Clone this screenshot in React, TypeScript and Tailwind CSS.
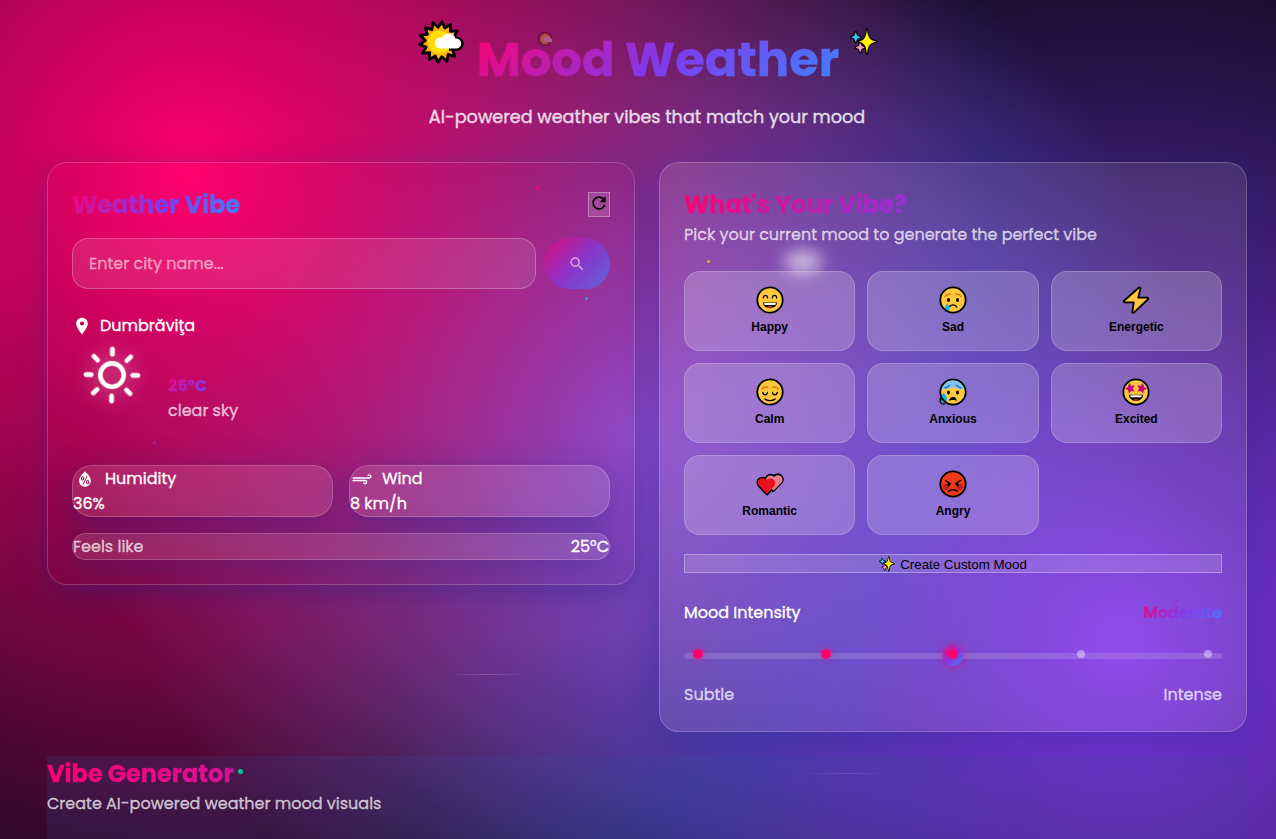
import React from "react";
import { MdLocationOn, MdRefresh, MdSearch } from "react-icons/md";
import { WiDaySunny, WiHumidity, WiStrongWind } from "react-icons/wi";

const spikes = Array.from({ length: 28 }, (_, i) => {
  const r = i % 2 ? 14.8 : 20.5;
  const a = (i * Math.PI) / 14 - Math.PI / 2 + 0.1;
  return `${22 + r * Math.cos(a)},${22 + r * Math.sin(a)}`;
}).join(" ");

function SunCloud({ className }: { className: string }) {
  return (
    <svg viewBox="0 0 46 44" className={className}>
      <polygon points={spikes} fill="#ffb00f" stroke="#000" strokeWidth="2.8" strokeLinejoin="round" />
      <circle cx="21.500" cy="22" r="11.5" fill="#ffdc05" />
      <path d="M31 29.300h7.500c8 0 7.400-10.600.2-11.500" fill="none" stroke="#000" strokeWidth="2.800" />
      <path d="M22.500 28.600a5.600 5.600 0 0 1 0-11.200 6 6 0 0 1 2-.1 7 7 0 0 1 13 1.200 5 5 0 1 1 1.200 10.100z" fill="#fff" />
    </svg>
  );
}

function Sparkles({ className }: { className: string }) {
  return (
    <svg viewBox="0 0 28 28" className={className} stroke="#000" strokeWidth="2.400" strokeLinejoin="round">
      <g>
        <path d="M5.800 4.200l1.300 3.700L10.800 9.200 7.100 10.500 5.800 14.200 4.500 10.500 1.300 9.200 4.500 7.900z" />
        <path d="M10.200 15l1.300 3.300L14.700 19.600 11.500 20.900 10.200 24.500 8.900 20.900 5.700 19.600 8.900 18.300z" />
        <path d="M17 1.500c.8 8 2.300 10.800 9.600 12-7.300 1.200-8.800 4-9.600 12.600-.8-8.600-2.300-11.400-8.300-12.600 6-1.200 7.500-4 8.300-12z" />
      </g>
      <g stroke="none">
        <path d="M5.800 4.200l1.500 3.500L10.800 9.200 7.300 10.700 5.800 14.200 4.300 10.700 1.300 9.200 4.300 7.700z" fill="#3bc5f0" />
        <path d="M10.200 15l1.500 3.100L14.700 19.600 11.700 21.100 10.200 24.500 8.700 21.100 5.700 19.600 8.700 18.100z" fill="#f29bb8" />
        <path d="M17 1.500c1 7.800 2.500 10.600 9.600 12-7.100 1.400-8.600 4.200-9.600 12.600-1-8.400-2.500-11.200-8.300-12.600 5.800-1.400 7.300-4.200 8.300-12z" fill="#fff000" />
      </g>
    </svg>
  );
}

function Face({ fill, children }: { fill: string; children: React.ReactNode }) {
  return (
    <svg viewBox="0 0 28 28" className="h-7 w-7" fill="none" strokeLinecap="round">
      <circle cx="14" cy="14" r="12.7" fill={fill} />
      {children}
      <circle cx="14" cy="14" r="12.700" stroke="#000" strokeWidth="1.800" />
    </svg>
  );
}

const yellow = "#ffc83d";

const moods: { name: string; icon: React.ReactNode }[] = [
  {
    name: "Happy",
    icon: (
      <Face fill={yellow}>
        <path d="M7.300 12c.4-3.400 4-3.400 4.400 0M16.300 12c.4-3.400 4-3.400 4.400 0" stroke="#000" strokeWidth="1.200" />
        <path d="M7 16.500h14c0 7.500-14 7.500-14 0z" fill="#000" />
        <path d="M8.200 17h11.600l-.4 1.900H8.600z" fill="#fff" />
        <path d="M11 21.200c1.500-1.600 4.500-1.600 6 0-1.600.8-4.400.8-6 0z" fill="#d6291c" />
      </Face>
    ),
  },
  {
    name: "Sad",
    icon: (
      <Face fill={yellow}>
        <path d="M6 10.500c1-1.800 3-2.600 5.200-2.200M22 10.500c-1-1.800-3-2.600-5.200-2.200" stroke="#d67d00" strokeWidth="1.400" />
        <ellipse cx="9.500" cy="14" rx="1.500" ry="2.100" fill="#000" />
        <ellipse cx="18.500" cy="14" rx="1.500" ry="2.100" fill="#000" />
        <path d="M10.200 21c1.300-2.800 6.300-2.800 7.600 0" stroke="#000" strokeWidth="1.400" />
        <path d="M8.300 17.500c2 3 2.800 4.200 2.300 5.700-.8 2-4 2-4.700 0-.5-1.500.4-2.700 2.400-5.700z" fill="#00b5f5" />
      </Face>
    ),
  },
  {
    name: "Energetic",
    icon: (
      <svg viewBox="0 0 28 28" className="h-7 w-7">
        <path d="M17 1.500L1.800 15l.6 1.400h9.400L10.300 26.500l1.300.4L26.200 13l-.5-1.400h-9.500L18.600 2z" fill={yellow} stroke="#000" strokeWidth="1.800" strokeLinejoin="round" />
      </svg>
    ),
  },
  {
    name: "Calm",
    icon: (
      <Face fill={yellow}>
        <path d="M5.800 11c.8-1.600 3-2.400 5.700-1.800M22.200 11c-.8-1.600-3-2.400-5.700-1.800" stroke="#d67d00" strokeWidth="1.400" />
        <path d="M6.800 14.500c.5 3 4.200 3 4.700 0M16.500 14.500c.5 3 4.200 3 4.700 0M9 21c2 2.200 8 2.200 10 0" stroke="#000" strokeWidth="1.400" />
      </Face>
    ),
  },
  {
    name: "Anxious",
    icon: (
      <Face fill={yellow}>
        <path d="M1.400 12.800a12.600 12.600 0 0 1 25.200 0c-4-3.600-21-3.600-25.200 0z" fill="#83c6f2" />
        <path d="M6 9.700c1.500.2 3-.8 4.500-2.400M22 9.700c-1.500.2-3-.8-4.500-2.400" stroke="#1376bd" strokeWidth="1.400" />
        <ellipse cx="9.500" cy="14.600" rx="1.500" ry="2.100" fill="#000" />
        <ellipse cx="18.500" cy="14.600" rx="1.500" ry="2.100" fill="#000" />
        <path d="M10 23c.6-5.400 7.400-5.400 8 0-1.500-1.200-6.500-1.200-8 0z" fill="#000" />
        <path d="M4.800 14.600c2.200 3.500 3.600 5.800 3 8-.9 2.900-5.400 2.900-6.200 0-.6-2.200 1-4.500 3.200-8z" fill="#00b5f5" />
        <path d="M1.300 20.500c-.8 4 1 6 4 5.500" stroke="#000" strokeWidth="1.400" />
      </Face>
    ),
  },
  {
    name: "Excited",
    icon: (
      <Face fill={yellow}>
        <path d="M7.200 4.800l1.900 2.900 3.500-.5-1.700 3.200 1.800 3-3.500-.4-2.300 2.500-.8-3.400-3.200-1.300 3-1.800z" fill="#c4007c" />
        <path d="M20.800 4.800l-1.900 2.900-3.500-.5 1.700 3.200-1.800 3 3.500-.4 2.300 2.500.8-3.400 3.200-1.300-3-1.800z" fill="#c4007c" />
        <path d="M7 16.700h14c0 8-14 8-14 0z" fill="#000" />
        <path d="M8.200 17.200h11.600l-.5 2H8.700z" fill="#fff" />
        <path d="M11.300 22c1.300-1.500 4-1.500 5.400 0-1.500.8-4 .8-5.400 0z" fill="#d6291c" />
      </Face>
    ),
  },
  {
    name: "Romantic",
    icon: (
      <svg viewBox="0 0 28 28" className="h-7 w-7">
        <g fill="#000" stroke="#000" strokeWidth="3.600" strokeLinejoin="round">
          <path d="M17 20.300l8-8.300c3.500-4.500-2.700-9.500-7-5-2.800-3-7.500-1-7.500 2.800z" />
          <path d="M11 23.500L3.200 15.300c-3.200-4.600 2.300-9.200 7.300-4.800 5-3.600 10 .8 7 5.500z" />
        </g>
        <path d="M17.500 20.800l8-8.300c3.500-5-2.700-10-7.500-5.500-2.800-3-8-1-8 2.800z" fill="#e87c8c" />
        <path d="M11 24L2.800 15.300c-3.200-5 2.300-9.700 7.500-5.300 5.400-3.800 11.200.8 8 6z" fill="#ea1020" />
      </svg>
    ),
  },
  {
    name: "Angry",
    icon: (
      <Face fill="#f03a17">
        <circle cx="7" cy="17" r="3" fill="#bb1d24" />
        <circle cx="21" cy="17" r="3" fill="#bb1d24" />
        <path d="M6.500 10.500l5 3.300M21.500 10.500l-5 3.300" stroke="#000" strokeWidth="1.300" />
        <ellipse cx="9.700" cy="14.600" rx="1.400" ry="2" fill="#000" />
        <ellipse cx="18.300" cy="14.600" rx="1.400" ry="2" fill="#000" />
        <path d="M9.500 21.300c2-2 7-2 9 0" stroke="#000" strokeWidth="1.400" />
      </Face>
    ),
  },
];

const steps = [true, true, true, false, false];

const gradientText = "bg-[linear-gradient(135deg,#ff006e_0%,#8338ec_50%,#3a86ff_100%)] bg-clip-text text-transparent";
const glassShadow = "shadow-[0_8px_32px_rgba(31,38,135,0.37)]";

export default function App() {
  return (
    <div className="relative h-[839px] w-full overflow-hidden bg-[#0f0a1e] bg-[radial-gradient(circle_800px_at_190px_175px,#ff006e_0%,transparent_100%),radial-gradient(circle_720px_at_1120px_640px,#8338ec_0%,transparent_100%),radial-gradient(circle_550px_at_640px_430px,#3a86ff_0%,transparent_100%)] font-['Poppins','Inter','Liberation_Sans',sans-serif] text-base leading-[25.6px] text-white [-webkit-text-stroke:0.3px]">
      <div className="flex h-full flex-col pl-[47px] pr-[29px]">
        <header className="flex h-[162px] shrink-0 flex-col items-center">
          <div className="relative ml-[22px] mt-[24px] flex h-[72px] items-center">
            <SunCloud className="absolute -left-[59px] -top-[4px] h-[44px] w-[46px]" />
            <h1 className={`text-[48px] font-bold leading-[72px] ${gradientText}`}>Mood Weather</h1>
            <Sparkles className="absolute -right-[39px] top-[4px] h-7 w-7" />
            <SunCloud className="absolute left-[60px] top-[7px] h-[16px] w-[17px] rotate-12 opacity-30" />
          </div>
          <p className="mt-[7px] text-[17.6px] leading-[28px] text-white/80">AI-powered weather vibes that match your mood</p>
        </header>

        <main className="grid grid-cols-2 items-start gap-6">
          <section className={`flex h-[423px] flex-col rounded-[20px] border border-white/20 p-6 ${glassShadow}`}>
            <div className="flex h-9 items-center justify-between">
              <h2 className={`text-2xl font-bold leading-9 ${gradientText}`}>Weather Vibe</h2>
              <button className="mb-[2px] flex h-[25px] w-[22px] justify-center border border-white/30 bg-white/15 text-black [-webkit-text-stroke:0]">
                <MdRefresh size={20} />
              </button>
            </div>
            <div className="mt-[15px] flex h-[51px] gap-2">
              <input placeholder="Enter city name..." className="min-w-0 flex-1 rounded-[16px] border border-white/25 bg-white/10 px-4 text-base text-white placeholder:text-white/50 focus:outline-none" />
              <button className="flex w-[66px] items-center justify-center rounded-[25px] bg-[linear-gradient(135deg,#ff006e_0%,#8338ec_50%,#3a86ff_100%)] opacity-60">
                <MdSearch size={18} />
              </button>
            </div>
            <div className="mt-6 flex h-[25px] items-center gap-2">
              <MdLocationOn size={20} />
              <span>Dumbrăviţa</span>
            </div>
            <div className="mt-[-3px] flex h-[90px] gap-4">
              <WiDaySunny size={80} stroke="currentColor" strokeWidth={0.1} className="mt-px shrink-0 rotate-1 drop-shadow-[0_0_8px_rgba(255,255,255,0.4)]" />
              <div className="pt-[38px] leading-[25px]">
                <div className={`w-[70px] font-bold ${gradientText}`}>25°C</div>
                <div className="text-white/70">clear sky</div>
              </div>
            </div>
            <div className="mt-10 grid grid-cols-2 gap-4">
              {[
                { label: "Humidity", value: "36%", Icon: WiHumidity },
                { label: "Wind", value: "8 km/h", Icon: WiStrongWind },
              ].map(({ label, value, Icon }) => (
                <div key={label} className={`h-[52px] rounded-[20px] border border-white/20 bg-white/[0.12] leading-[25px] ${glassShadow}`}>
                  <div className="flex items-center gap-2">
                    <Icon size={24} />
                    <span>{label}</span>
                  </div>
                  <div>{value}</div>
                </div>
              ))}
            </div>
            <div className={`mt-4 flex h-[27px] items-center justify-between rounded-[16px] border border-white/20 bg-white/[0.12] ${glassShadow}`}>
              <span className="text-white/70">Feels like</span>
              <span>25°C</span>
            </div>
          </section>

          <section className={`flex h-[570px] flex-col rounded-[20px] border border-white/20 bg-white/10 p-6 ${glassShadow}`}>
            <h2 className={`text-2xl font-bold leading-9 ${gradientText}`}>What's Your Vibe?</h2>
            <p className="h-[24px] leading-6 text-white/70">Pick your current mood to generate the perfect vibe</p>
            <div className="mt-6 grid grid-cols-3 gap-3">
              {moods.map((m) => (
                <button key={m.name} className="flex h-20 flex-col items-center rounded-[16px] border border-white/20 bg-white/20 pt-[14px] font-['Liberation_Sans',Arial,sans-serif] text-[12px] font-bold leading-[14px] text-black [-webkit-text-stroke:0]">
                  {m.icon}
                  <span className="mt-[6px]">{m.name}</span>
                </button>
              ))}
            </div>
            <button className="mt-[19px] flex h-[19px] shrink-0 items-center justify-center gap-[5px] border border-white/30 bg-white/15 font-['Liberation_Sans',Arial,sans-serif] text-[13.333px] leading-none text-black [-webkit-text-stroke:0]">
              <Sparkles className="mt-px h-4 w-4" />
              <span className="pt-[2px]">Create Custom Mood</span>
            </button>
            <div className="mt-[27px] flex h-[26px] shrink-0 items-center justify-between">
              <span>Mood Intensity</span>
              <span className={`font-semibold ${gradientText}`}>Moderate</span>
            </div>
            <div className="mt-[17px] flex h-[26px] items-center">
              <div className="relative h-1.5 w-full rounded-[3px] bg-white/15">
                <div className="absolute left-[259px] -top-[7px] h-5 w-5 rounded-full bg-[linear-gradient(135deg,#ff006e_0%,#8338ec_50%,#3a86ff_100%)] shadow-[0_0_10px_rgba(255,0,110,0.5)]" />
                <div className="absolute inset-x-[9px] -top-[4px] flex h-[10px] items-center justify-between">
                  {steps.map((on, i) =>
                    on ? (
                      <span key={i} className="h-[10px] w-[10px] rounded-full bg-[#ff006e] shadow-[0_0_8px_rgba(255,0,110,0.5)]" />
                    ) : (
                      <span key={i} className="m-px h-2 w-2 rounded-full bg-white/40" />
                    ),
                  )}
                </div>
              </div>
            </div>
            <div className="mt-[14px] flex h-6 items-center justify-between text-white/70">
              <span>Subtle</span>
              <span>Intense</span>
            </div>
          </section>
        </main>

        <section className="mt-6 flex-1 bg-[#3a4ca0]/20">
          <h2 className={`text-2xl font-bold leading-9 ${gradientText}`}>Vibe Generator</h2>
          <p className="leading-6 text-white/70">Create AI-powered weather mood visuals</p>
        </section>
      </div>

      <div className="pointer-events-none absolute inset-0">
        <span className="absolute left-[535px] top-[186px] h-1 w-1 rounded-full bg-[#ff006e]/70" />
        <span className="absolute left-[585px] top-[297px] h-[3px] w-[3px] rounded-full bg-[#06d6a0]/70" />
        <span className="absolute left-[153px] top-[441px] h-[3px] w-[3px] rounded-full bg-[#8338ec]/60" />
        <span className="absolute left-[707px] top-[260px] h-[3px] w-[3px] rounded-full bg-[#ffbe0b]/80" />
        <span className="absolute left-[238px] top-[769px] h-[5px] w-[5px] rounded-full bg-[#06d6a0]/90" />
        <span className="absolute left-[1176px] top-[599px] h-[4px] w-[4px] rounded-full bg-[#8338ec]/70" />
        <span className="absolute left-[784px] top-[250px] h-[24px] w-[38px] rounded-[50%] bg-white/60 blur-[8px]" />
        <span className="absolute left-[447px] top-[674px] h-px w-[80px] bg-[linear-gradient(90deg,transparent,rgba(255,255,255,0.2),transparent)]" />
        <span className="absolute left-[800px] top-[773px] h-px w-[90px] bg-[linear-gradient(90deg,transparent,rgba(255,255,255,0.12),transparent)]" />
      </div>
    </div>
  );
}
